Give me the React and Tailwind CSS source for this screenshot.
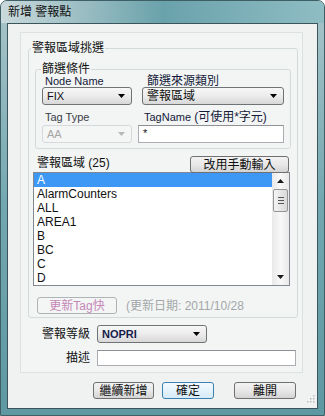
import React from 'react';

const font = "font-['Liberation_Sans','Noto_Sans_CJK_TC',sans-serif]";

const Arrow = ({ color = '#000' }) => (
    <svg width="7" height="4" viewBox="0 0 7 4" className="shrink-0">
        <path d="M0 0h7L3.5 4z" fill={color} />
    </svg>
);

const Combo = ({ className, children, disabled }) => (
    <div className={`${className} flex h-[18px] items-center justify-between rounded-[3px] border pl-[4px] pr-[6px] ${disabled ? 'border-[#d6d9db] bg-[#f4f5f5] text-[#a6a6a6]' : 'border-[#6f7375] bg-gradient-to-b from-[#f7f7f7] via-[#ececec] to-[#d8d8d8] text-[#111]'}`}>
        <span className="leading-[16px]">{children}</span>
        <Arrow color={disabled ? '#b8b8b8' : '#000'} />
    </div>
);

const Input = ({ className, children }) => (
    <div className={`${className} border border-[#abadb3] border-t-[#8e9096] bg-white pl-[4px] text-[11px] leading-[14px] text-[#111]`}>{children}</div>
);

const Btn = ({ className, children, primary }) => (
    <div className={`${className} flex h-[17px] items-center justify-center rounded-[3px] border text-[12px] leading-[14px] text-[#111] ${primary ? 'border-[#3c7fb1] bg-gradient-to-b from-[#f4fafe] to-[#d6ebf9]' : 'border-[#707070] bg-gradient-to-b from-[#f3f3f3] via-[#e8e8e8] to-[#d4d4d4]'}`}>
        {children}
    </div>
);

const items = ['A', 'AlarmCounters', 'ALL', 'AREA1', 'B', 'BC', 'C', 'D'];

const ScrollBar = () => (
    <div className="flex w-[17px] flex-col bg-gradient-to-r from-[#e9e9e9] via-[#f8f8f8] to-[#e9e9e9]">
        <div className="flex h-[16px] items-center justify-center">
            <svg width="7" height="4" viewBox="0 0 7 4"><path d="M0 4h7L3.5 0z" fill="#1a1a1a" /></svg>
        </div>
        <div className="mx-[1px] flex h-[23px] flex-col items-center justify-center gap-[2px] rounded-[2px] border border-[#959595] bg-gradient-to-r from-[#f4f4f4] to-[#d9d9d9]">
            <div className="h-px w-[6px] bg-[#555]" />
            <div className="h-px w-[6px] bg-[#555]" />
            <div className="h-px w-[6px] bg-[#555]" />
        </div>
        <div className="flex-1" />
        <div className="flex h-[16px] items-center justify-center">
            <Arrow color="#1a1a1a" />
        </div>
    </div>
);

export default function App() {
    return (
        <div className={`${font} flex h-[416px] w-[325px] flex-col overflow-hidden rounded-t-[7px] border border-[#3f5f66] bg-gradient-to-b from-[#a9c5c9] via-[#72a7b0] to-[#5e98a3]`}>
            {/* title bar */}
            <div className="-mx-px -mt-px flex h-[23px] items-center bg-gradient-to-r from-[#cbdadc] via-[#6aa2ab] to-[#8fbdc4] pl-[8px] text-[12px] leading-[14px] text-[#111]">新增 警報點</div>

            {/* client area */}
            <div className="mx-[6px] mb-[6px] flex flex-1 flex-col border border-[#3b555c] bg-[#eff2f1]">
                <div className="ml-[12px] mt-[8px] flex h-[341px] w-[283px] flex-col border border-[#dbe2e1] bg-[#f2f5f4]">
                    {/* 警報區域挑選 */}
                    <fieldset className="ml-[7px] mt-[9px] w-[270px] rounded-[3px] border border-[#d3dbda] p-0 pb-[3px]">
                        <legend className="ml-[2px] px-[1px] text-[12px] leading-[12px] text-[#111]">警報區域挑選</legend>

                        {/* 篩選條件 */}
                        <fieldset className="ml-[6px] mt-[9px] w-[256px] rounded-[3px] border border-[#d3dbda] p-0 pb-[5px]">
                            <legend className="ml-[5px] px-[1px] text-[12px] leading-[12px] text-[#111]">篩選條件</legend>
                            <div className="grid grid-cols-[102px_1fr] text-[#15193a]">
                                <div className="pl-[9px] text-[11px] leading-[12px]">Node Name</div>
                                <div className="pl-[9px] text-[12px] leading-[12px]">篩選來源類別</div>
                                <Combo className="ml-[6px] w-[90px] text-[11px]">FIX</Combo>
                                <Combo className="ml-[4px] w-[142px] text-[12px]">警報區域</Combo>
                                <div className="mt-[6px] pl-[9px] text-[11px] leading-[12px] text-[#3a3d4a]">Tag Type</div>
                                <div className="mt-[6px] pl-[6px] text-[11px] leading-[12px]">TagName <span className="text-[12px]">(可使用*字元)</span></div>
                                <Combo className="ml-[6px] mt-[2px] w-[90px] text-[11px]" disabled>AA</Combo>
                                <Input className="mt-[2px] h-[18px] w-[146px]">*</Input>
                            </div>
                        </fieldset>

                        <div className="mt-[7px] flex h-[16px] items-start">
                            <div className="ml-[8px] mt-[1px] text-[12px] leading-[12px] text-[#111]">警報區域 (25)</div>
                            <Btn className="ml-auto mr-[8px] h-[16px] w-[99px]">改用手動輸入</Btn>
                        </div>

                        <div className="ml-[4px] flex h-[114px] w-[257px] border border-[#828790] bg-white">
                            <div className="flex-1">
                                {items.map((it, i) => (
                                    <div key={it} className={`h-[14px] pl-[3px] text-[12px] leading-[14px] ${i === 0 ? 'bg-[#3c98f4] text-white' : 'text-[#111]'}`}>{it}</div>
                                ))}
                            </div>
                            <ScrollBar />
                        </div>

                        <div className="mt-[11px] flex items-center">
                            <div className="ml-[8px] flex h-[17px] w-[80px] items-center justify-center rounded-[3px] border border-[#aeb3b6] bg-[#f4f5f5] text-[12px] leading-[14px] text-[#c487b8]">更新Tag快</div>
                            <div className="ml-[9px] text-[12px] leading-[14px] text-[#a3a7a9]">(更新日期: 2011/10/28</div>
                        </div>
                    </fieldset>

                    <div className="mt-[7px] flex items-center">
                        <div className="w-[69px] text-right text-[12px] leading-[14px] text-[#111]">警報等級</div>
                        <Combo className="ml-[7px] w-[110px] text-[11px] font-bold text-[#15204a]">NOPRI</Combo>
                    </div>
                    <div className="mt-[7px] flex items-center">
                        <div className="w-[69px] text-right text-[12px] leading-[14px] text-[#111]">描述</div>
                        <Input className="ml-[7px] h-[16px] w-[199px]" />
                    </div>
                </div>

                <div className="mt-[9px] flex items-start">
                    <Btn className="ml-[85px] w-[61px]">繼續新增</Btn>
                    <Btn className="ml-[8px] w-[52px]" primary>確定</Btn>
                    <Btn className="ml-[20px] w-[62px]">離開</Btn>
                    <svg width="8" height="8" viewBox="0 0 8 8" className="ml-auto mr-[2px] mt-[13px]">
                        <rect x="6" y="0" width="1.5" height="1.5" fill="#b5bdbd" />
                        <rect x="3" y="3" width="1.5" height="1.5" fill="#b5bdbd" />
                        <rect x="6" y="3" width="1.5" height="1.5" fill="#b5bdbd" />
                        <rect x="0" y="6" width="1.5" height="1.5" fill="#b5bdbd" />
                        <rect x="3" y="6" width="1.5" height="1.5" fill="#b5bdbd" />
                        <rect x="6" y="6" width="1.5" height="1.5" fill="#b5bdbd" />
                    </svg>
                </div>
            </div>
        </div>
    );
}
